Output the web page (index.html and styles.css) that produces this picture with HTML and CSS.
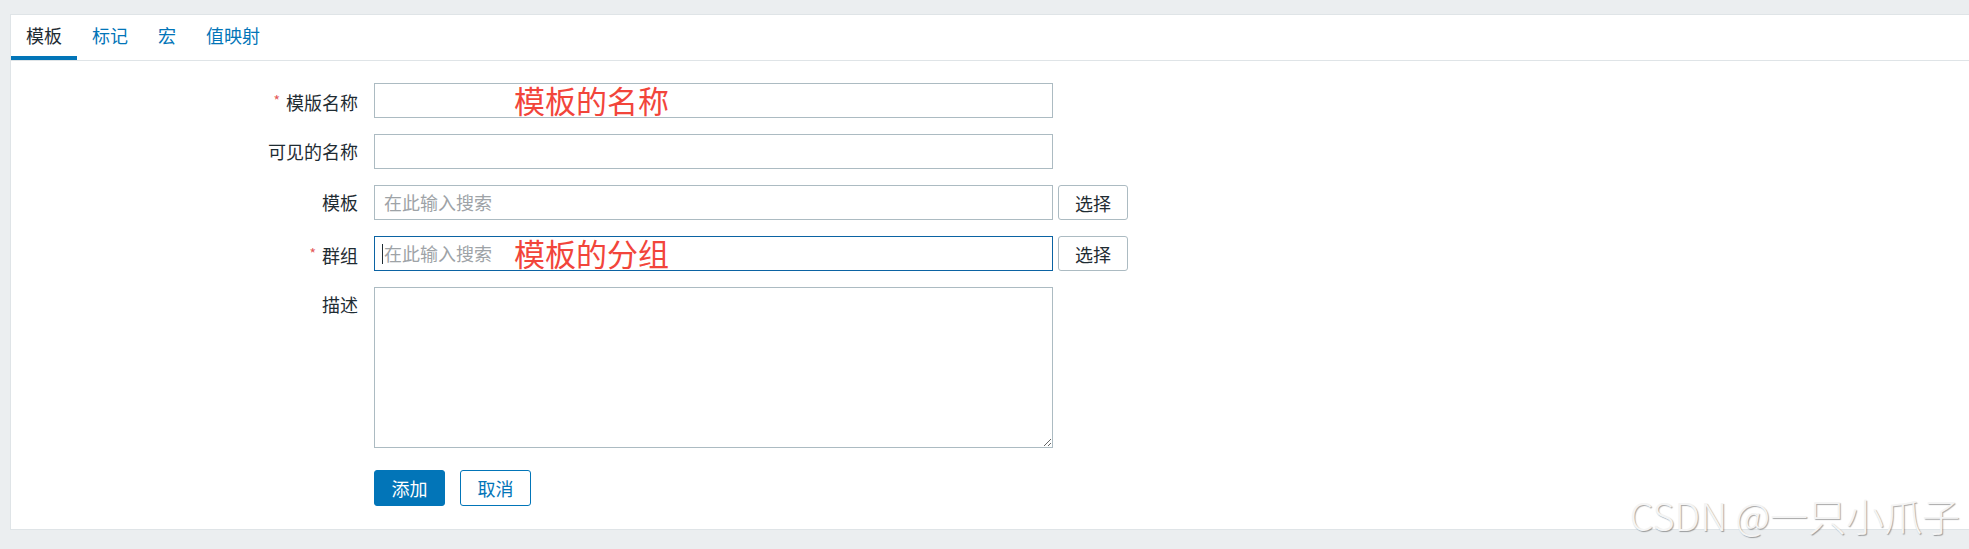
FILE: index.html
```html
<!DOCTYPE html>
<html lang="zh-CN">
<head>
<meta charset="utf-8">
<title>模板</title>
<link rel="stylesheet" href="styles.css">
</head>
<body>
<div class="page">
  <div class="panel">
    <nav class="tabs">
      <span class="tab active">模板</span>
      <span class="tab">标记</span>
      <span class="tab">宏</span>
      <span class="tab">值映射</span>
    </nav>
    <form class="form">
      <div class="row">
        <label class="label"><span class="req">*</span>模版名称</label>
        <div class="field">
          <div class="input"><span class="note">模板的名称</span></div>
        </div>
      </div>
      <div class="row">
        <label class="label">可见的名称</label>
        <div class="field">
          <div class="input"></div>
        </div>
      </div>
      <div class="row">
        <label class="label">模板</label>
        <div class="field">
          <div class="input"><span class="placeholder">在此输入搜索</span></div>
          <button type="button" class="btn-alt">选择</button>
        </div>
      </div>
      <div class="row">
        <label class="label"><span class="req">*</span>群组</label>
        <div class="field">
          <div class="input focused"><span class="caret"></span><span class="placeholder">在此输入搜索</span><span class="note">模板的分组</span></div>
          <button type="button" class="btn-alt">选择</button>
        </div>
      </div>
      <div class="row row-desc">
        <label class="label">描述</label>
        <div class="field">
          <textarea class="textarea"></textarea>
        </div>
      </div>
      <div class="actions">
        <button type="button" class="btn-primary">添加</button>
        <button type="button" class="btn-cancel">取消</button>
      </div>
    </form>
    <div class="watermark">CSDN @一只小爪子</div>
  </div>
</div>
</body>
</html>
```
FILE: styles.css
```css
* { box-sizing: border-box; }
html, body {
  margin: 0;
  padding: 0;
  background: #ebeef0;
  height: 549px;
  overflow: hidden;
}
body {
  font-family: "Noto Sans CJK SC", "Noto Sans", sans-serif;
  font-size: 18px;
  color: #1f2c33;
}
.page {
  padding: 14px 0 0 10px;
}
.panel {
  position: relative;
  background: #fff;
  border: 1px solid #dfe4e7;
  border-right: none;
}
.tabs {
  display: flex;
  height: 46px;
  border-bottom: 1px solid #dfe4e7;
}
.tab {
  height: 45px;
  line-height: 41px;
  padding: 0 15px;
  color: #0275b8;
  border-bottom: 4px solid transparent;
}
.tab.active {
  color: #1f2c33;
  border-bottom-color: #0275b8;
}
.form {
  padding: 22px 0 23px 0;
}
.row {
  display: flex;
  align-items: flex-start;
  margin-bottom: 16px;
}
.row-desc { margin-bottom: 22px; }
.label {
  width: 347px;
  margin-right: 16px;
  text-align: right;
  line-height: 35px;
  height: 35px;
}
.req {
  color: #e45959;
  font-size: 14px;
  vertical-align: 4px;
  margin-right: 6px;
}
.field {
  display: flex;
  gap: 5px;
}
.input {
  position: relative;
  width: 679px;
  height: 35px;
  border: 1px solid #acbbc2;
  background: #fff;
  padding-left: 9px;
  line-height: 33px;
}
.input.focused {
  border-color: #0b63a3;
}
.placeholder {
  color: #9ea3a7;
}
.caret {
  position: absolute;
  left: 7px;
  top: 7px;
  width: 1px;
  height: 20px;
  background: #1f2c33;
}
.note {
  position: absolute;
  left: 139px;
  top: -4px;
  font-size: 31px;
  line-height: 40px;
  color: #f2453b;
}
.btn-alt {
  width: 70px;
  height: 35px;
  border: 1px solid #acbbc2;
  border-radius: 3px;
  background: #fff;
  font-family: inherit;
  font-size: 18px;
  color: #1f2c33;
  padding: 0;
}
.textarea {
  display: block;
  width: 679px;
  height: 161px;
  border: 1px solid #acbbc2;
  border-radius: 0;
  margin: 0;
  background: #fff;
  font-family: inherit;
  font-size: 18px;
  resize: both;
}
.actions {
  display: flex;
  gap: 15px;
  padding-left: 363px;
}
.btn-primary, .btn-cancel {
  width: 71px;
  height: 36px;
  border-radius: 3px;
  font-family: inherit;
  font-size: 18px;
  padding: 0;
}
.btn-primary {
  background: #0275b8;
  border: 1px solid #0275b8;
  color: #fff;
}
.btn-cancel {
  background: #fff;
  border: 1px solid #0275b8;
  color: #0275b8;
}
.watermark {
  position: absolute;
  right: 9px;
  bottom: -10px;
  font-family: "Noto Sans CJK SC", "Noto Sans", sans-serif;
  font-weight: 300;
  font-size: 38px;
  line-height: 48px;
  color: #f4f4f4;
  text-shadow: 1px 1px 1px rgba(0, 0, 0, 0.35);
  white-space: nowrap;
}
```
